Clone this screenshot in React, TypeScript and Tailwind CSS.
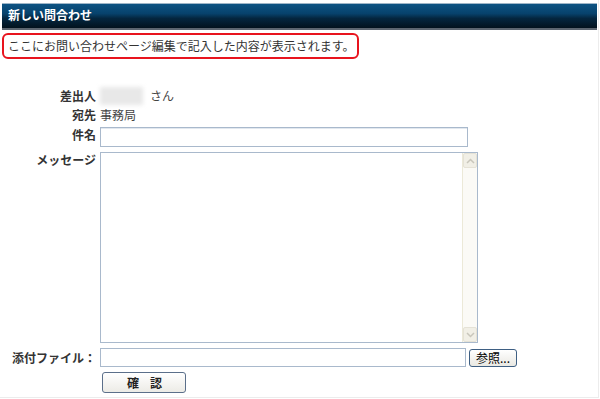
import React from "react";

const font = { fontFamily: '"Noto Sans CJK JP", "Noto Sans", sans-serif' };

function ScrollBar() {
  return (
    <div className="flex w-[15px] flex-col border-l border-[#ece9d8] bg-[#fbfaf6]">
      <div className="flex h-[15px] items-center justify-center rounded-[2px] border border-[#e5e2d6] bg-[#f1efe6]">
        <svg width="9" height="6" viewBox="0 0 9 6"><path d="M1 5 L4.5 1.5 L8 5" fill="none" stroke="#c9c6bb" strokeWidth="1.5" /></svg>
      </div>
      <div className="flex-1" />
      <div className="flex h-[15px] items-center justify-center rounded-[2px] border border-[#e5e2d6] bg-[#f1efe6]">
        <svg width="9" height="6" viewBox="0 0 9 6"><path d="M1 1 L4.5 4.5 L8 1" fill="none" stroke="#c9c6bb" strokeWidth="1.5" /></svg>
      </div>
    </div>
  );
}

export default function App() {
  return (
    <div className="relative h-[399px] w-[600px] overflow-hidden bg-white text-[12px] text-[#333]" style={font}>
      <div className="flex h-[398px] w-[599px] flex-col border-r border-b border-[#ececec] pl-[2px] pr-[2px] pt-[3px]">
        {/* header */}
        <div className="h-[27px] w-[595px] border-t border-[#9fb6c8] border-b-2 border-b-[#5c6670] bg-[linear-gradient(to_bottom,#0d5383_0%,#07426c_40%,#04263f_60%,#02121d_100%)] pl-[6px]">
          <div className="pt-[3px] text-[12px] font-bold leading-[16px] text-white">新しい問合わせ</div>
        </div>
        {/* notice */}
        <div className="mt-[3px] flex h-[26px] w-[357px] items-center rounded-[6px] border-2 border-[#e8141e] pl-[4px] text-[12px] leading-none text-[#333]">
          ここにお問い合わせページ編集で記入した内容が表示されます。
        </div>
        {/* form */}
        <div className="mt-[27px] grid grid-cols-[94px_1fr] gap-x-[4px]">
          <div className="flex h-[20px] items-center justify-end font-bold">差出人</div>
          <div className="flex h-[20px] items-center gap-[7px]">
            <div className="h-[18px] w-[43px] bg-[#e8e8e8] blur-[2px]" />
            <span className="text-[#444]">さん</span>
          </div>
          <div className="flex h-[17px] items-center justify-end font-bold">宛先</div>
          <div className="flex h-[17px] items-center text-[#444]">事務局</div>

          <div className="mt-[4px] flex h-[16px] items-center justify-end font-bold">件名</div>
          <div className="mt-[4px] h-[20px] w-[368px] border border-[#a9b9cc] shadow-[inset_0_1px_0_#e2e8ef]" />

          <div className="mt-[5px] flex h-[16px] items-center justify-end font-bold">メッセージ</div>
          <div className="mt-[5px] flex h-[191px] w-[378px] border border-[#a9b9cc] bg-white">
            <div className="flex-1" />
            <ScrollBar />
          </div>

          <div className="mt-[5px] flex h-[19px] items-center justify-end font-bold">添付ファイル：</div>
          <div className="mt-[5px] flex items-center gap-[3px]">
            <div className="h-[19px] w-[366px] border border-[#a9b9cc]" />
            <div className="flex h-[18px] w-[48px] items-center justify-center rounded-[3px] border border-[#3e5f83] bg-[linear-gradient(to_bottom,#ffffff,#e9e8e2)] text-[12px] leading-none text-black">
              参照...
            </div>
          </div>

          <div />
          <div className="ml-[2px] mt-[5px] flex h-[21px] w-[84px] items-center justify-center rounded-[3px] border border-[#5b6f8a] bg-[linear-gradient(to_bottom,#ffffff,#ecebe6)] pl-[1px] text-[12px] font-bold leading-none tracking-[0.9em] text-[#222]">
            <span className="pl-[0.9em]">確認</span>
          </div>
        </div>
      </div>
    </div>
  );
}
